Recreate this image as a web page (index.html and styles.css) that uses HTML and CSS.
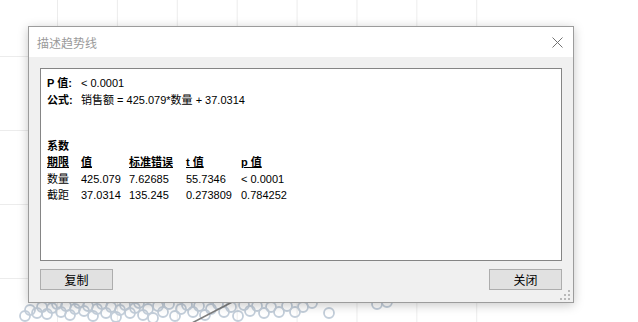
FILE: index.html
```html
<!DOCTYPE html>
<html lang="zh-CN">
<head>
  <meta charset="UTF-8" />
  <title>描述趋势线</title>
  <link rel="stylesheet" href="styles.css">
</head>
<body>

<div class="plot">
  <svg class="marks" width="638" height="322" viewBox="0 0 638 322">
    <g class="dots">
      <circle cx="25" cy="316" r="5"/><circle cx="30" cy="310" r="5"/><circle cx="37" cy="313" r="5"/>
      <circle cx="42" cy="307" r="5"/><circle cx="47" cy="314" r="5"/><circle cx="52" cy="308" r="5"/>
      <circle cx="57" cy="304" r="5"/><circle cx="61" cy="312" r="5"/><circle cx="66" cy="306" r="5"/>
      <circle cx="70" cy="315" r="5"/><circle cx="75" cy="309" r="5"/><circle cx="79" cy="303" r="5"/>
      <circle cx="84" cy="311" r="5"/><circle cx="88" cy="306" r="5"/><circle cx="93" cy="316" r="5"/>
      <circle cx="97" cy="309" r="5"/><circle cx="102" cy="304" r="5"/><circle cx="106" cy="313" r="5"/>
      <circle cx="111" cy="307" r="5"/><circle cx="116" cy="317" r="5"/><circle cx="120" cy="310" r="5"/>
      <circle cx="125" cy="305" r="5"/><circle cx="130" cy="313" r="5"/><circle cx="135" cy="308" r="5"/>
      <circle cx="139" cy="303" r="5"/><circle cx="143" cy="315" r="5"/><circle cx="148" cy="309" r="5"/>
      <circle cx="153" cy="318" r="5"/><circle cx="158" cy="306" r="5"/><circle cx="163" cy="312" r="5"/>
      <circle cx="169" cy="304" r="5"/><circle cx="175" cy="316" r="5"/><circle cx="181" cy="309" r="5"/>
      <circle cx="187" cy="305" r="5"/><circle cx="193" cy="312" r="5"/><circle cx="199" cy="306" r="5"/>
      <circle cx="205" cy="315" r="5"/><circle cx="211" cy="309" r="5"/><circle cx="218" cy="304" r="5"/>
      <circle cx="224" cy="312" r="5"/><circle cx="231" cy="307" r="5"/><circle cx="238" cy="316" r="5"/>
      <circle cx="244" cy="305" r="5"/><circle cx="250" cy="311" r="5"/><circle cx="257" cy="306" r="5"/>
      <circle cx="264" cy="313" r="5"/><circle cx="271" cy="307" r="5"/><circle cx="279" cy="312" r="5"/>
      <circle cx="287" cy="306" r="5"/><circle cx="295" cy="312" r="5"/><circle cx="303" cy="307" r="5"/>
      <circle cx="312" cy="303" r="5"/><circle cx="329" cy="313" r="5"/><circle cx="377" cy="304" r="5"/>
      <circle cx="387" cy="302" r="5"/>
    </g>
    <line x1="190" y1="324" x2="240" y2="298" class="trend"/>
  </svg>
</div>

<div class="dialog">
  <div class="title-bar">
    <span class="title">描述趋势线</span>
    <svg class="close" width="11" height="11" viewBox="0 0 11 11">
      <path d="M0.5 0.5 L10.5 10.5 M10.5 0.5 L0.5 10.5"/>
    </svg>
  </div>

  <div class="dialog-body">
    <div class="result">
      <div class="line"><b class="label">P 值:</b>&lt; 0.0001</div>
      <div class="line"><b class="label">公式:</b>销售额 = 425.079*数量 + 37.0314</div>

      <div class="line section"><b>系数</b></div>
      <div class="coef">
        <b class="head">期限</b><b class="head">值</b><b class="head">标准错误</b><b class="head">t 值</b><b class="head">p 值</b>
        <span>数量</span><span>425.079</span><span>7.62685</span><span>55.7346</span><span>&lt; 0.0001</span>
        <span>截距</span><span>37.0314</span><span>135.245</span><span>0.273809</span><span>0.784252</span>
      </div>
    </div>

    <div class="buttons">
      <button class="btn">复制</button>
      <button class="btn">关闭</button>
    </div>
  </div>

  <svg class="grip" width="10" height="10" viewBox="0 0 10 10">
    <rect x="8" y="0" width="2" height="2"/>
    <rect x="4" y="4" width="2" height="2"/><rect x="8" y="4" width="2" height="2"/>
    <rect x="0" y="8" width="2" height="2"/><rect x="4" y="8" width="2" height="2"/><rect x="8" y="8" width="2" height="2"/>
  </svg>
</div>

</body>
</html>
```

FILE: styles.css
```css
* { box-sizing: border-box; margin: 0; padding: 0; }
body {
  background: #fff;
  font-family: "Liberation Sans", "Noto Sans CJK SC", sans-serif;
  width: 638px;
  height: 322px;
  overflow: hidden;
  position: relative;
}
.plot {
  position: absolute;
  left: 0;
  top: 0;
  width: 638px;
  height: 322px;
}
.plot::before {
  content: "";
  position: absolute;
  left: 0;
  top: 0;
  width: 480px;
  height: 322px;
  background-image:
    linear-gradient(to right, #ececec 1px, transparent 1px),
    linear-gradient(to bottom, #ececec 1px, transparent 1px);
  background-size: 59.9px 100%, 100% 74px;
  background-position: 57px 0, 0 56px;
}
.marks {
  position: absolute;
  left: 0;
  top: 0;
}
.dots circle {
  fill: none;
  stroke: #c3ceda;
  stroke-width: 1.8;
}
.trend {
  stroke: #7d7d7d;
  stroke-width: 1.6;
}
.dialog {
  position: absolute;
  left: 28px;
  top: 26px;
  width: 546px;
  height: 277px;
  background: #f0f0f0;
  border: 1px solid #9c9c9c;
  box-shadow: 0 2px 10px rgba(0, 0, 0, 0.22);
  display: flex;
  flex-direction: column;
}
.title-bar {
  height: 30px;
  background: #fff;
  display: flex;
  align-items: center;
  justify-content: space-between;
  padding: 0 10px 0 8px;
}
.title {
  color: #9a9a9a;
  font-size: 12px;
}
.close path {
  stroke: #727272;
  stroke-width: 1;
  fill: none;
}
.dialog-body {
  flex: 1;
  padding: 11px 11px 12px 11px;
  display: flex;
  flex-direction: column;
  gap: 8px;
}
.result {
  flex: 1;
  background: #fff;
  border: 1px solid #858585;
  padding: 6px 6px;
  font-size: 11px;
  color: #000;
  line-height: 16.6px;
}
.result b { font-weight: bold; }
.label {
  display: inline-block;
  width: 34px;
}
.section { margin-top: 29.5px; }
.coef {
  display: grid;
  grid-template-columns: 34px 48px 57px 55px auto;
}
.coef .head { text-decoration: underline; }
.buttons {
  display: flex;
  justify-content: space-between;
}
.btn {
  width: 73px;
  height: 21px;
  background: #e1e1e1;
  border: 1px solid #adadad;
  font-family: "Noto Sans CJK SC", sans-serif;
  font-size: 12px;
  color: #000;
}
.grip {
  position: absolute;
  right: 3px;
  bottom: 2px;
}
.grip rect { fill: #b8b8b8; }
```
